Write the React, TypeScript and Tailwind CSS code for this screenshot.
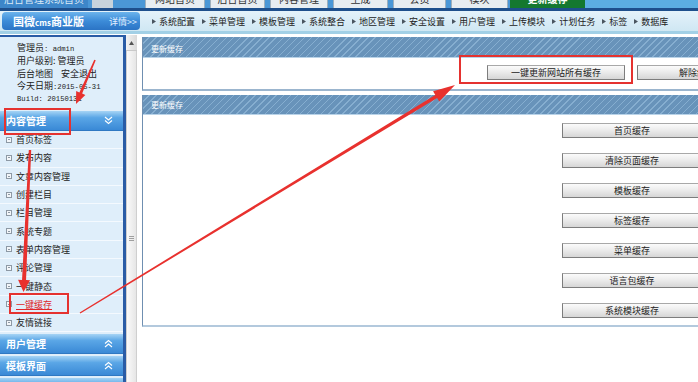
import React from "react";

const sideItems = [
  "首页标签",
  "发布内容",
  "文章内容管理",
  "创建栏目",
  "栏目管理",
  "系统专题",
  "表单内容管理",
  "评论管理",
  "一键静态",
  "一键缓存",
  "友情链接",
];

const navItems = [
  "系统配置",
  "菜单管理",
  "模板管理",
  "系统整合",
  "地区管理",
  "安全设置",
  "用户管理",
  "上传模块",
  "计划任务",
  "标签",
  "数据库",
];

const cacheButtons = [
  "首页缓存",
  "清除页面缓存",
  "模板缓存",
  "标签缓存",
  "菜单缓存",
  "语言包缓存",
  "系统模块缓存",
];

function Chevrons({ up }: { up?: boolean }) {
  return (
    <svg width="9" height="9" viewBox="0 0 9 9" className="shrink-0">
      {up ? (
        <g fill="none" stroke="#ffffff" strokeWidth="1.1">
          <path d="M1 4.5 L4.5 1.5 L8 4.5" />
          <path d="M1 8 L4.5 5 L8 8" />
        </g>
      ) : (
        <g fill="none" stroke="#ffffff" strokeWidth="1.1">
          <path d="M1 1 L4.5 4 L8 1" />
          <path d="M1 4.5 L4.5 7.5 L8 4.5" />
        </g>
      )}
    </svg>
  );
}

function SideHeader({ title, up }: { title: string; up?: boolean }) {
  return (
    <div className="flex h-[20px] items-center justify-between border-b border-[#2f78c2] bg-[linear-gradient(180deg,#a6d4f5_0%,#5aa6e6_35%,#3a89d6_100%)] pl-[6px] pr-[10px]">
      <span className="text-[10px] font-bold leading-none text-white">{title}</span>
      <Chevrons up={up} />
    </div>
  );
}

function Btn({ label, w = "w-[138px]" }: { label: string; w?: string }) {
  return (
    <div
      className={`flex h-[15px] ${w} shrink-0 items-center justify-center border border-[#7d7d7d] border-t-[#a8a8a8] bg-[linear-gradient(180deg,#fbfbfb_0%,#eaeaea_50%,#d6d6d6_100%)] text-[9px] leading-none text-[#222]`}
    >
      {label}
    </div>
  );
}

const stripe =
  "bg-[repeating-linear-gradient(135deg,#6893ba_0px,#6893ba_4px,#86aed0_4px,#86aed0_5px)]";

export default function App() {
  return (
    <div className="relative h-[382px] w-[698px] overflow-hidden bg-white font-['Noto_Sans_CJK_SC','Noto_Sans',sans-serif] text-[#222]">
      {/* top tab strip (cut) */}
      <div className="flex h-[8px] overflow-hidden bg-[#4b97d6]">
        <div className="w-[88px] shrink-0 overflow-hidden bg-[#3d86c9]">
          <div className="mt-[-7px] pl-[4px] text-[10px] leading-[12px] text-[#dbeaf7]">后台管理系统首页</div>
        </div>
        <div className="ml-[4px] w-[21px] shrink-0 bg-[#c7d3dc]" />
        <div className="w-[32px] shrink-0" />
        <div className="flex gap-[5px]">
          {[
            { w: "w-[60px]", t: "网站首页" },
            { w: "w-[55px]", t: "后台首页" },
            { w: "w-[58px]", t: "内容管理" },
            { w: "w-[55px]", t: "生成" },
            { w: "w-[53px]", t: "会员" },
            { w: "w-[57px]", t: "模块" },
          ].map((t, i) => (
            <div
              key={i}
              className={`${t.w} overflow-hidden border-x border-[#9fb0bd] bg-[#e8edf1]`}
            >
              <div className="mt-[-7px] text-center text-[10px] leading-[12px] text-[#333]">{t.t}</div>
            </div>
          ))}
        </div>
        <div className="ml-[2px] w-[75px] shrink-0 overflow-hidden bg-[#14782f]">
          <div className="mt-[-7px] text-center text-[10px] font-bold leading-[12px] text-white">更新缓存</div>
        </div>
        <div className="flex-1 bg-[#5caee2]" />
      </div>
      <div className="h-[3px] bg-[#1e4f8c]" />

      {/* nav bar */}
      <div className="flex h-[20px] items-center bg-[linear-gradient(180deg,#e4f2fa,#cfe7f3)]">
        <div className="ml-[2px] flex h-[18px] w-[138px] shrink-0 items-center justify-between rounded-[4px] bg-[linear-gradient(180deg,#6cb4ec_0%,#3c8bd8_50%,#2b74c5_100%)] pl-[11px] pr-[3px]">
          <span className="flex items-baseline text-[11px] font-bold leading-none text-white">
            国微<span className="text-[8px]">cms</span>商业版
          </span>
          <span className="text-[9px] leading-none text-[#e2f0ff]">详情&gt;&gt;</span>
        </div>
        <div className="ml-[12px] flex items-center">
          {navItems.map((n) => (
            <div key={n} className="mr-[7px] flex items-center gap-[3px]">
              <svg width="4" height="5" viewBox="0 0 4 5">
                <path d="M0 0 L4 2.5 L0 5 Z" fill="#4a5560" />
              </svg>
              <span className="text-[9px] leading-none text-[#222]">{n}</span>
            </div>
          ))}
        </div>
      </div>
      <div className="h-[3px] bg-[#a2d0e6]" />
      <div className="h-[1px] bg-white" />

      {/* main */}
      <div className="flex">
        {/* sidebar */}
        <div className="h-[350px] w-[126px] shrink-0 border-r-[3px] border-t-2 border-[#2a5ca6] bg-[#dfeefa]">
          <div className="h-[74px] pl-[17px] pt-[5px] text-[9px] leading-[12.3px] text-[#222]">
            <div>
              管理员<span className="font-['Liberation_Mono',monospace] text-[7.2px]">: admin</span>
            </div>
            <div>用户级别: 管理员</div>
            <div className="flex gap-[8px]">
              <span>后台地图</span>
              <span>安全退出</span>
            </div>
            <div>
              今天日期<span className="font-['Liberation_Mono',monospace] text-[7.2px]">:2015-05-31</span>
            </div>
            <div className="font-['Liberation_Mono',monospace] text-[7.2px]">Build: 20150131</div>
          </div>
          <SideHeader title="内容管理" />
          {sideItems.map((s) => (
            <div
              key={s}
              className="flex h-[18.3px] items-center gap-[4px] border-b border-[#f4f9fe] pl-[6px]"
            >
              <div className="flex h-[6px] w-[6px] items-center justify-center border border-[#8d99a5] bg-[#f3f6f9]">
                <div className="h-[1px] w-[2px] bg-[#8d99a5]" />
              </div>
              <span
                className={`text-[9px] leading-none ${
                  s === "一键缓存" ? "text-[#e0262a] underline decoration-[#e0262a]" : "text-[#222]"
                }`}
              >
                {s}
              </span>
            </div>
          ))}
          <div className="mt-[2px]">
            <SideHeader title="用户管理" up />
          </div>
          <div className="mt-[2px]">
            <SideHeader title="模板界面" up />
          </div>
          <div className="mt-[2px]">
            <SideHeader title="扩展" up />
          </div>
        </div>

        {/* scrollbar */}
        <div className="flex h-[350px] w-[11px] shrink-0 flex-col bg-[linear-gradient(90deg,#f3f3f3,#d9d9d9)]">
          <div className="flex h-[16px] items-center justify-center border-b border-[#c9c9c9]">
            <svg width="5" height="4" viewBox="0 0 5 4">
              <path d="M0 4 L2.5 0 L5 4 Z" fill="#555" />
            </svg>
          </div>
          <div className="flex-1 border-x border-[#cfcfcf] bg-[linear-gradient(90deg,#fafafa,#e6e6e6)] pt-[185px]">
            <svg width="9" height="6" viewBox="0 0 9 6" className="mx-auto">
              <path d="M2 0.5 H7 M2 2.5 H7 M2 4.5 H7" stroke="#8a8a8a" strokeWidth="0.8" />
            </svg>
          </div>
        </div>

        {/* content */}
        <div className="ml-[5px] w-[580px] shrink-0 pt-[2px]">
          {/* panel 1 */}
          <div className="border-b-2 border-l border-[#6f8fb1] border-b-[#9bb5ce]">
            <div className={`flex h-[21px] items-center border-b border-[#b9d3e8] pl-[8px] pt-[4px] ${stripe}`}>
              <span className="text-[8px] leading-none text-white">更新缓存</span>
            </div>
            <div className="flex h-[31px] gap-[12px] pl-[344px] pt-[7px]">
              <Btn label="一键更新网站所有缓存" />
              <Btn label="解除缓存锁定" />
            </div>
          </div>

          {/* panel 2 */}
          <div className="mt-[4px] border-b-2 border-l border-[#6f8fb1] border-b-[#b3c9dd]">
            <div className={`flex h-[20px] items-center border-b border-[#b9d3e8] pl-[8px] ${stripe}`}>
              <span className="text-[8px] leading-none text-white">更新缓存</span>
            </div>
            <div className="flex flex-col gap-[15px] pb-[7px] pl-[419px] pt-[8px]">
              {cacheButtons.map((b) => (
                <Btn key={b} label={b} w="w-[140px]" />
              ))}
            </div>
          </div>
        </div>
      </div>

      {/* red annotations */}
      <svg
        className="pointer-events-none absolute left-0 top-0"
        width="698"
        height="382"
        viewBox="0 0 698 382"
      >
        <g fill="none" stroke="#e5322f" strokeWidth="2">
          <rect x="5" y="109" width="65" height="25" />
          <rect x="10" y="294" width="58" height="19" />
          <rect x="460" y="56" width="172" height="27" />
        </g>
        <g fill="#e8312e">
          <polygon points="94.27,59.68 79.38,92.39 76.17,91 76,104 85.35,94.96 82.14,93.57 95.73,60.32" />
          <polygon points="28.8,149.95 22.05,279.9 18.06,279.7 23.5,292 30.04,280.3 26.05,280.1 31.2,150.05" />
          <polygon points="79.64,312.4 435.3,94.9 433.1,91.3 455,85 439.3,101.5 437.1,97.9 80.36,313.6" />
        </g>
      </svg>
    </div>
  );
}
